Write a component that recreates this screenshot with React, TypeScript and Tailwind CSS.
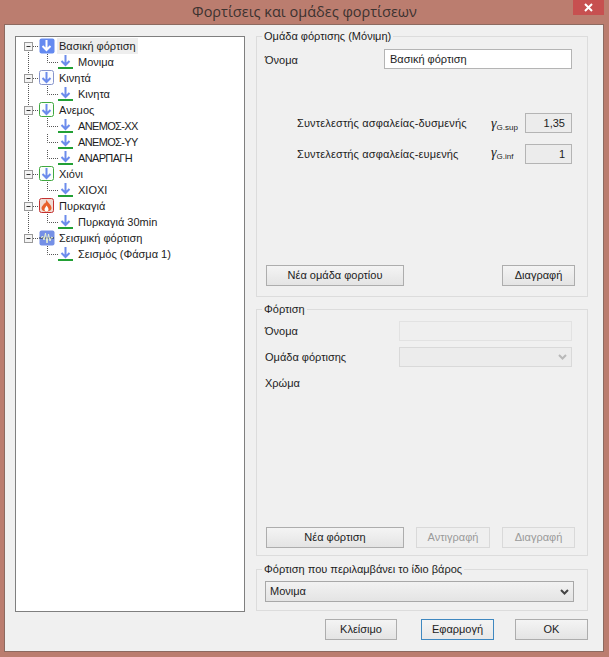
import { ReactNode } from 'react';

type IconKind = 'solid' | 'blue' | 'green' | 'fire' | 'wave';

const Arrow = ({ color = '#6c8cec' }: { color?: string }) => (
  <path d="M7.5 2V12M3.5 8L7.5 12L11.5 8" fill="none" stroke={color} strokeWidth="2" />
);

function GroupIcon({ kind }: { kind: IconKind }) {
  return (
    <svg width="16" height="16" viewBox="0 0 16 16" className="shrink-0">
      {kind === 'solid' && (
        <>
          <rect x="0.5" y="0.5" width="15" height="15" rx="2" fill="#648af0" />
          <Arrow color="#ffffff" />
        </>
      )}
      {kind === 'blue' && (
        <>
          <rect x="0.5" y="0.5" width="14" height="14" rx="2" fill="#fbfcff" stroke="#8795cc" />
          <Arrow />
        </>
      )}
      {kind === 'green' && (
        <>
          <rect x="0.5" y="0.5" width="14" height="14" rx="2" fill="#fbfffb" stroke="#3fa83f" />
          <Arrow />
        </>
      )}
      {kind === 'fire' && (
        <>
          <rect x="0.5" y="0.5" width="14" height="14" rx="2" fill="#f0dcd4" stroke="#c43030" />
          <path d="M7.5 1.5C8 4.5 12.5 6.5 12.5 10C12.5 12.5 10 13.5 7.5 13.5C5 13.5 2.5 12.5 2.5 10C2.5 8 4.5 7.5 5 5.5C6.5 6 7 4 7.5 1.5Z" fill="#e8622c" />
          <path d="M7.5 7.5C8.5 9 9.5 10 9.5 11.5C9.5 12.8 8.5 13.5 7.5 13.5C6.5 13.5 5.5 12.8 5.5 11.5C5.5 10 7 9 7.5 7.5Z" fill="#ffffff" />
        </>
      )}
      {kind === 'wave' && (
        <>
          <rect x="0.5" y="0.5" width="15" height="15" rx="2" fill="#7590e6" />
          <path d="M0 8H15" stroke="#20283a" strokeWidth="1" />
          <path d="M2 8L3.5 6L5 10L6.5 3L8 13L9.5 4L11 11L12.5 7L14 8" fill="none" stroke="#e8f0d0" strokeWidth="1" />
        </>
      )}
    </svg>
  );
}

const LoadIcon = () => (
  <svg width="15" height="16" viewBox="0 0 15 16" className="shrink-0">
    <path d="M7.5 1V11M3.5 7L7.5 11L11.5 7" fill="none" stroke="#6c8cec" strokeWidth="2" />
    <path d="M0 14H15" stroke="#22a035" strokeWidth="2" />
  </svg>
);

function ParentRow({ label, kind, selected, first, last }: { label: string; kind: IconKind; selected?: boolean; first?: boolean; last?: boolean }) {
  return (
    <div className="flex h-4 items-center">
      <svg width="23" height="16" viewBox="0 0 23 16" className="shrink-0">
        <path d={`M12.5 ${first ? 8 : 0}V${last ? 8 : 16}`} stroke="#555" strokeDasharray="1 1" />
        <path d="M17 8.5H23" stroke="#555" strokeDasharray="1 1" />
        <rect x="8.5" y="4.5" width="8" height="8" fill="#f4f4f4" stroke="#9a9a9a" />
        <path d="M10.5 8.5H14.5" stroke="#333" />
      </svg>
      <GroupIcon kind={kind} />
      <span className={`ml-[2px] h-4 px-[2px] leading-4 ${selected ? 'bg-[#eeeeee]' : ''}`}>{label}</span>
    </div>
  );
}

function ChildRow({ label, root = true, caps }: { label: string; root?: boolean; caps?: boolean }) {
  return (
    <div className="flex h-4 items-center">
      <svg width="42" height="16" viewBox="0 0 42 16" className="shrink-0">
        {root && <path d="M12.5 0V16" stroke="#555" strokeDasharray="1 1" />}
        <path d="M31.5 0V8.5H42" fill="none" stroke="#555" strokeDasharray="1 1" />
      </svg>
      <LoadIcon />
      <span className={`ml-[5px] leading-4 ${caps ? 'tracking-[-0.65px]' : ''}`}>{label}</span>
    </div>
  );
}

function Btn({ children, width, disabled, active }: { children: ReactNode; width: string; disabled?: boolean; active?: boolean }) {
  const tone = disabled
    ? 'border-[#d9d9d9] bg-[#efefef] text-[#9a9a9a]'
    : active
      ? 'border-[#3f88c0] bg-gradient-to-b from-[#f4f4f4] to-[#e8e8e8]'
      : 'border-[#adadad] bg-gradient-to-b from-[#f4f4f4] to-[#e4e4e4]';
  return <button className={`flex h-[21px] items-center justify-center border ${tone} ${width}`}>{children}</button>;
}

function Group({ title, className, children }: { title: string; className: string; children: ReactNode }) {
  return (
    <section className={`relative flex flex-col border border-[#dcdcdc] ${className}`}>
      <span className="absolute left-[5px] top-[-7px] bg-[#f0f0f0] px-[2px] leading-[13px]">{title}</span>
      {children}
    </section>
  );
}

const Chevron = ({ color }: { color: string }) => (
  <svg width="9" height="6" viewBox="0 0 9 6">
    <path d="M1 1L4.5 4.5L8 1" fill="none" stroke={color} strokeWidth="2" />
  </svg>
);

function Factor({ label, sub, value, className, symbolClass }: { label: string; sub: string; value: string; className: string; symbolClass: string }) {
  return (
    <div className={`flex h-5 items-center pl-[40px] ${className}`}>
      <span className="w-[194px] tracking-[0.14px]">{label}</span>
      <span className={`flex w-[34px] items-start ${symbolClass}`}>
        <i className="font-['Liberation_Serif',serif] text-[14px] leading-4">γ</i>
        <span className="mt-[6px] text-[8px] leading-3">{sub}</span>
      </span>
      <div className="flex h-5 w-[47px] items-center justify-end border border-[#b4b4b4] bg-[#ececec] pr-[6px]">{value}</div>
    </div>
  );
}

export default function App() {
  return (
    <div className="flex h-[657px] w-[609px] flex-col bg-[#bb7d6f] font-['Liberation_Sans',sans-serif] text-[11px] text-[#1c1c1c]">
      <header className="relative flex h-6 shrink-0 items-center justify-center">
        <h1 className="font-['Open_Sans',sans-serif] text-[14.5px] text-[#3c3230]">Φορτίσεις και ομάδες φορτίσεων</h1>
        <div className="absolute right-[5px] top-0 flex h-[15px] w-[31px] items-center justify-center bg-[#c75050]">
          <svg width="9" height="9" viewBox="0 0 9 9">
            <path d="M1 1L8 8M8 1L1 8" stroke="#ffffff" strokeWidth="2" />
          </svg>
        </div>
      </header>

      <main className="ml-1 flex h-[628px] w-[600px] border border-[#8d6a60] bg-[#f0f0f0] pl-[10px] pt-[11px]">
        <div className="h-[576px] w-[230px] shrink-0 border border-[#7f7f7f] bg-white pt-[1px]">
          <ParentRow label="Βασική φόρτιση" kind="solid" selected first />
          <ChildRow label="Μονιμα" />
          <ParentRow label="Κινητά" kind="blue" />
          <ChildRow label="Κινητα" />
          <ParentRow label="Ανεμος" kind="green" />
          <ChildRow label="ΑΝΕΜΟΣ-ΧΧ" caps />
          <ChildRow label="ΑΝΕΜΟΣ-ΥΥ" caps />
          <ChildRow label="ΑΝΑΡΠΑΓΗ" caps />
          <ParentRow label="Χιόνι" kind="green" />
          <ChildRow label="ΧΙΟΧΙ" />
          <ParentRow label="Πυρκαγιά" kind="fire" />
          <ChildRow label="Πυρκαγιά 30min" />
          <ParentRow label="Σεισμική φόρτιση" kind="wave" last />
          <ChildRow label="Σεισμός (Φάσμα 1)" root={false} />
        </div>

        <div className="ml-[11px] flex w-[332px] shrink-0 flex-col">
          <Group title="Ομάδα φόρτισης (Μόνιμη)" className="h-[261px]">
            <div className="mt-3 flex h-5 items-center justify-between pl-2 pr-[15px]">
              <span className="mt-[2px]">Όνομα</span>
              <div className="flex h-5 w-[188px] items-center border border-[#b4b4b4] bg-white pl-[5px]">Βασική φόρτιση</div>
            </div>
            <Factor className="mt-11" symbolClass="mt-[4px]" label="Συντελεστής ασφαλείας-δυσμενής" sub="G.sup" value="1,35" />
            <Factor className="mt-[11px]" symbolClass="" label="Συντελεστής ασφαλείας-ευμενής" sub="G.inf" value="1" />
            <div className="mt-auto mb-[10px] flex justify-between pl-[9px] pr-3">
              <Btn width="w-[138px]">Νέα ομάδα φορτίου</Btn>
              <Btn width="w-[73px]">Διαγραφή</Btn>
            </div>
          </Group>

          <Group title="Φόρτιση" className="mt-3 h-[247px]">
            <div className="mt-[11px] flex h-5 items-center justify-between pl-2 pr-[15px]">
              <span>Όνομα</span>
              <div className="h-5 w-[173px] border border-[#e2e2e2] bg-[#efefef]" />
            </div>
            <div className="mt-[6px] flex h-5 items-center justify-between pl-2 pr-[15px]">
              <span>Ομάδα φόρτισης</span>
              <div className="flex h-5 w-[173px] items-center justify-end border border-[#d9d9d9] bg-[#ececec] pr-[4px]">
                <Chevron color="#b8b8b8" />
              </div>
            </div>
            <div className="mt-2 pl-2 leading-4">Χρώμα</div>
            <div className="mt-auto mb-[7px] flex pl-[9px] pr-3">
              <Btn width="w-[138px]">Νέα φόρτιση</Btn>
              <Btn width="ml-3 w-[74px]" disabled>Αντιγραφή</Btn>
              <Btn width="ml-3 w-[73px]" disabled>Διαγραφή</Btn>
            </div>
          </Group>

          <Group title="Φόρτιση που περιλαμβάνει το ίδιο βάρος" className="mt-[13px] h-[42px]">
            <div className="ml-2 mt-[11px] flex h-[21px] w-[309px] items-center justify-between border border-[#a8a8a8] bg-gradient-to-b from-[#f2f2f2] to-[#e4e4e4] pl-[4px] pr-[4px]">
              <span>Μονιμα</span>
              <Chevron color="#444444" />
            </div>
          </Group>

          <div className="mt-2 flex justify-end">
            <Btn width="w-[72px]">Κλείσιμο</Btn>
            <Btn width="ml-6 w-[73px]" active>Εφαρμογή</Btn>
            <Btn width="ml-[21px] w-[73px]">OK</Btn>
          </div>
        </div>
      </main>
    </div>
  );
}
